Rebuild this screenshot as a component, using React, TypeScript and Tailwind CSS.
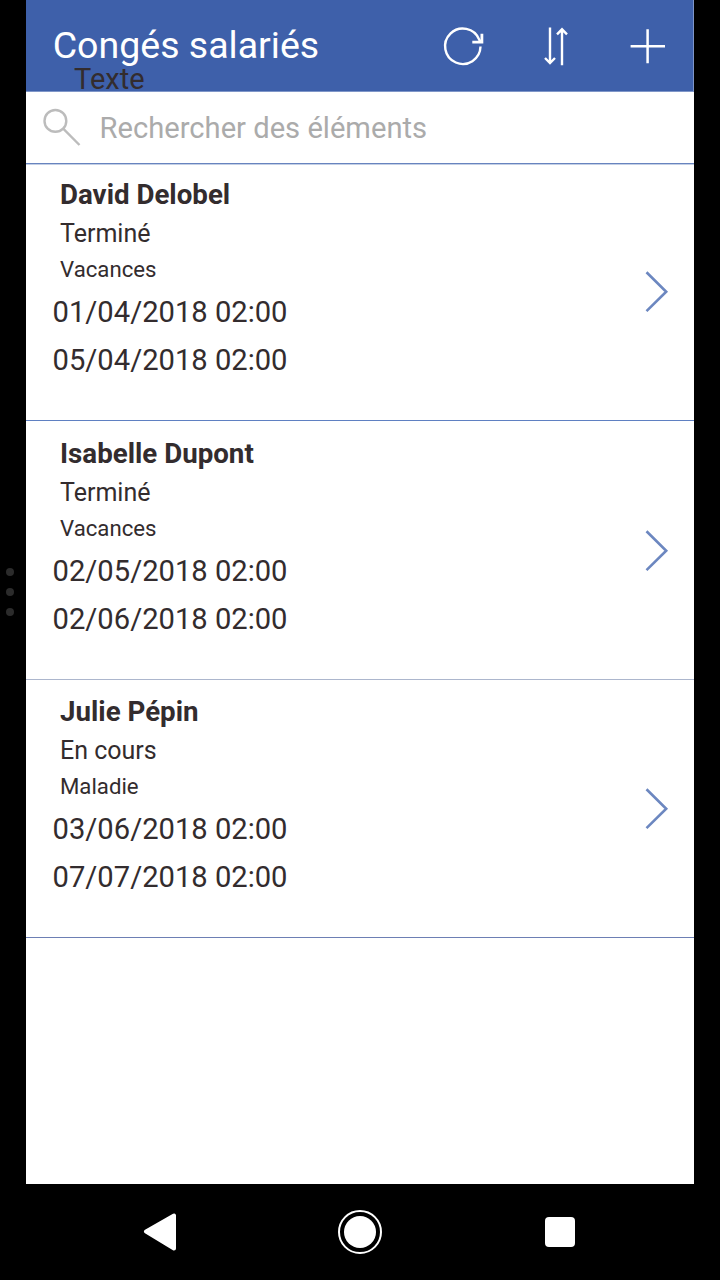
const LEAVES = [
    {
        name: "David Delobel",
        status: "Terminé",
        type: "Vacances",
        start: "01/04/2018 02:00",
        end: "05/04/2018 02:00",
        row: "h-[256px] border-[#5f80c2]",
        body: "pt-[14px]"
    },
    {
        name: "Isabelle Dupont",
        status: "Terminé",
        type: "Vacances",
        start: "02/05/2018 02:00",
        end: "02/06/2018 02:00",
        row: "h-[259px] border-[#acb6cd]",
        body: "pt-[16.5px]"
    },
    {
        name: "Julie Pépin",
        status: "En cours",
        type: "Maladie",
        start: "03/06/2018 02:00",
        end: "07/07/2018 02:00",
        row: "h-[258px] border-[#6d7fb4]",
        body: "pt-[16px]"
    }
];

function Header() {
    return (
        <header className="relative flex h-[92px] shrink-0 items-center border-r border-b border-[#7f96c8] bg-[#3e60aa] pl-[26px] text-white">
            <h1 className="w-[390px] pb-0.5 pl-[0.7px] text-[37.5px] leading-[44px] whitespace-nowrap">Congés salariés</h1>
            <button className="h-11 w-11">
                <svg className="h-11 w-11" viewBox="0 0 44 44" fill="none" stroke="currentColor" strokeWidth="2.4">
                    <path d="M38.5 22.6A17.7 17.7 0 1 1 37.2 15.6L38.6 18" />
                    <path d="M39.9 9.8V18.2H30.3" strokeWidth="2.8" />
                </svg>
            </button>
            <button className="ml-[48px] h-11 w-11">
                <svg className="h-11 w-11" viewBox="0 0 44 44" fill="none" stroke="currentColor" strokeWidth="2.4">
                    <path d="M16 3.5V39M11 34L16 39L21 34M28 41.3V5.3M23 10.3L28 5.3L33 10.3" />
                </svg>
            </button>
            <button className="ml-[48px] h-11 w-11">
                <svg className="h-11 w-11" viewBox="0 0 44 44" fill="none" stroke="currentColor" strokeWidth="2.5">
                    <path d="M21.6 5.3V39.3M4.6 22.2H39" />
                </svg>
            </button>
            <span className="absolute top-[62px] left-[48px] text-[29px] leading-[34px] text-[#332c2e]">Texte</span>
        </header>
    );
}

function SearchBar() {
    return (
        <div className="flex h-[72px] shrink-0 items-center border-b border-[#6884bf] pl-4">
            <svg className="h-10 w-10" viewBox="0 0 40 40" fill="none" stroke="#bcbcbc" strokeWidth="2.4">
                <circle cx="13.4" cy="12.9" r="10.9" />
                <path d="M21.2 20.7L37.5 37" />
            </svg>
            <span className="ml-[17.6px] text-[29.15px] leading-[34px] text-[#ababab]">Rechercher des éléments</span>
        </div>
    );
}

export default function App() {
    return (
        <div className="flex h-[1280px] w-[720px] flex-col bg-black font-[Roboto,sans-serif]">
            <div className="flex h-[1184px]">
                <aside className="flex w-[26px] shrink-0 flex-col items-start justify-center gap-3 pl-1.5">
                    <i className="h-2 w-2 rounded-full bg-[#2b2b2b]" />
                    <i className="h-2 w-2 rounded-full bg-[#2b2b2b]" />
                    <i className="h-2 w-2 rounded-full bg-[#2b2b2b]" />
                </aside>
                <main className="flex w-[668px] flex-col bg-white text-[#332c2e]">
                    <Header />
                    <SearchBar />
                    <ul className="border-t border-[#c3cfe5]">
                        {LEAVES.map((leave) => (
                            <li key={leave.name} className={`flex justify-between border-b pr-[25px] pl-[26px] ${leave.row}`}>
                                <div className={leave.body}>
                                    <p className="pl-2 text-[27.7px] leading-8 font-bold">{leave.name}</p>
                                    <p className="mt-[8px] pl-2 text-[25px] leading-[30px]">{leave.status}</p>
                                    <p className="mt-[6px] pl-2 text-[22.2px] leading-[28px]">{leave.type}</p>
                                    <p className="mt-[10px] pl-[0.6px] text-[29.15px] leading-[38px]">{leave.start}</p>
                                    <p className="mt-[10px] pl-[0.6px] text-[29.15px] leading-[38px]">{leave.end}</p>
                                </div>
                                <div className={leave.body}>
                                    <svg className="mt-[92px] h-[42px] w-6" viewBox="0 0 24 42" fill="none" stroke="#6c87c0" strokeWidth="2.6">
                                        <path d="M1.5 1.3L21.2 20.7L1.5 40.1" />
                                    </svg>
                                </div>
                            </li>
                        ))}
                    </ul>
                </main>
            </div>
            <nav className="flex h-24 items-center justify-between pr-[145px] pl-[143px]">
                <svg className="h-[38px] w-[34px]" viewBox="0 0 34 38" fill="white" stroke="white" strokeWidth="4" strokeLinejoin="round">
                    <path d="M3 18.5L31 2.5V35.5Z" />
                </svg>
                <svg className="mr-[3px] h-11 w-11" viewBox="0 0 44 44" fill="none">
                    <circle cx="22" cy="22" r="21" stroke="white" strokeWidth="2" />
                    <circle cx="22" cy="22" r="16" fill="white" />
                </svg>
                <div className="h-[30px] w-[30px] rounded-sm bg-white" />
            </nav>
        </div>
    );
}
